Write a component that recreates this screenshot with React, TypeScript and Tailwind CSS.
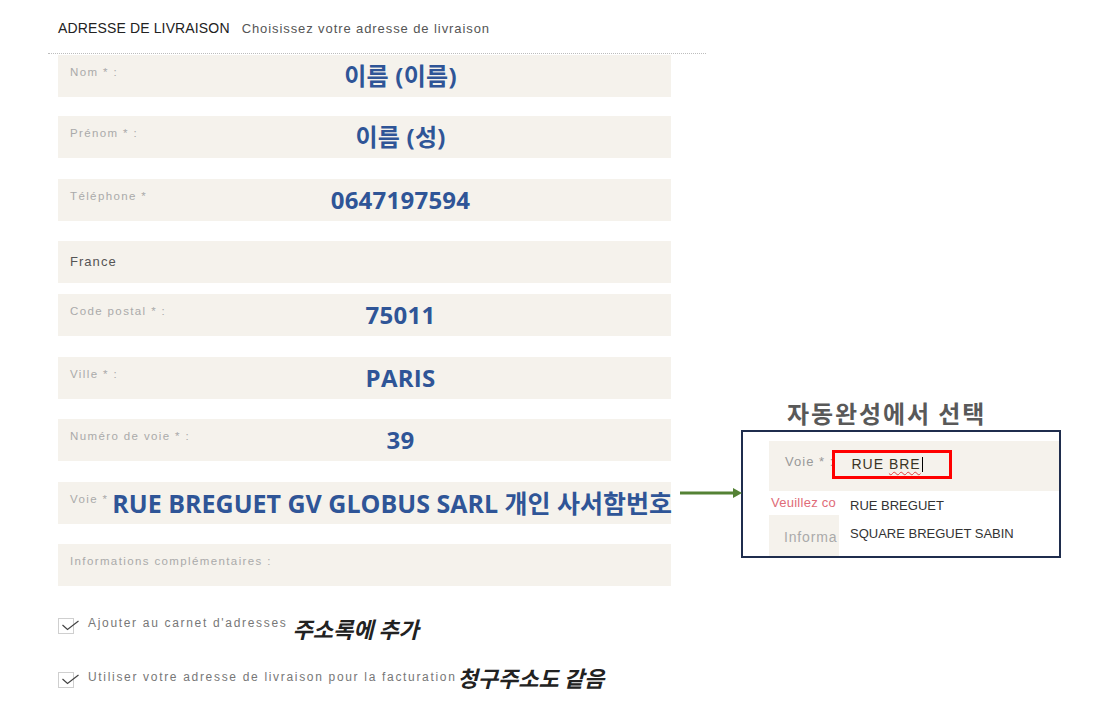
import React from "react";

interface Field {
  label: string;
  value?: string;
  gap: string;
}

const fields: Field[] = [
  { label: "Nom * :", value: "이름 (이름)", gap: "mt-0" },
  { label: "Prénom * :", value: "이름 (성)", gap: "mt-[19px]" },
  { label: "Téléphone *", value: "0647197594", gap: "mt-[21px]" },
];

const fields2: Field[] = [
  { label: "Code postal * :", value: "75011", gap: "mt-[11px]" },
  { label: "Ville * :", value: "PARIS", gap: "mt-[21px]" },
  { label: "Numéro de voie * :", value: "39", gap: "mt-[20px]" },
];

const FieldRow: React.FC<{ field: Field }> = ({ field }) => (
  <div className={"grid h-[42px] bg-[#f5f2ec] " + field.gap}>
    <span className="col-start-1 row-start-1 self-start whitespace-nowrap pl-[12px] pt-[11px] text-[11.5px] leading-[13px] tracking-[0.12em] text-[#aaa]">
      {field.label}
    </span>
    {field.value && (
      <span className="col-start-1 row-start-1 self-center justify-self-center pl-[72px] font-['Open_Sans','Noto_Sans_CJK_KR',sans-serif] text-[24px] font-bold leading-[30px] tracking-[0.01em] text-[#2f5597]">
        {field.value}
      </span>
    )}
  </div>
);

// small square with a tick drawn over it
const CheckBox = () => (
  <svg width="22" height="16" viewBox="0 0 22 16" className="shrink-0">
    <rect x="0.5" y="0.5" width="15" height="15" fill="white" stroke="#cfcfcf" />
    <path d="M4.5 7 L9.5 11.5 L20.5 3" fill="none" stroke="#444" strokeWidth="1.2" />
  </svg>
);

export default function App() {
  return (
    <div className="relative h-[707px] w-[1103px] overflow-hidden bg-white font-['Liberation_Sans',sans-serif]">
      <div className="flex">
        {/* form */}
        <div className="ml-[48px] w-[658px]">
          <div className="flex h-[53px] items-baseline pl-[10px] pt-[19px]">
            <span className="text-[14px] leading-[18px] tracking-[0.01em] text-[#222]">ADRESSE DE LIVRAISON</span>
            <span className="ml-[12px] text-[13px] leading-[18px] tracking-[0.07em] text-[#555]">
              Choisissez votre adresse de livraison
            </span>
          </div>
          <div className="border-t border-dotted border-[#bdbdbd]" />
          <div className="ml-[10px] mt-[1px] w-[613px]">
            {fields.map((f) => (
              <FieldRow key={f.label} field={f} />
            ))}
            <div className="mt-[20px] flex h-[42px] items-center bg-[#f5f2ec] pl-[12px] text-[13px] tracking-[0.08em] text-[#555]">
              France
            </div>
            {fields2.map((f) => (
              <FieldRow key={f.label} field={f} />
            ))}
            <div className="mt-[21px] flex h-[42px] items-center bg-[#f5f2ec] pl-[12px]">
              <span className="shrink-0 self-start whitespace-nowrap pt-[11px] text-[11.5px] leading-[13px] tracking-[0.12em] text-[#aaa]">
                Voie *
              </span>
              <span className="ml-[4px] whitespace-nowrap font-['Open_Sans','Noto_Sans_CJK_KR',sans-serif] text-[25px] font-bold leading-[30px] text-[#2f5597]">
                RUE BREGUET GV GLOBUS SARL 개인 사서함번호
              </span>
            </div>
            <FieldRow field={{ label: "Informations complémentaires :", gap: "mt-[20px]" }} />

            <div className="mt-[32px] flex items-start">
              <CheckBox />
              <span className="ml-[8px] whitespace-nowrap text-[12px] leading-[11px] tracking-[0.14em] text-[#777]">
                Ajouter au carnet d'adresses
              </span>
              <span className="ml-[5px] -mt-[3px] whitespace-nowrap font-['Noto_Sans_CJK_KR',sans-serif] text-[22px] font-bold italic leading-[26px] text-[#222]">
                주소록에 추가
              </span>
            </div>
            <div className="mt-[31px] flex items-start">
              <CheckBox />
              <span className="ml-[8px] whitespace-nowrap text-[12px] leading-[11px] tracking-[0.14em] text-[#777]">
                Utiliser votre adresse de livraison pour la facturation
              </span>
              <span className="ml-[1px] -mt-[8px] whitespace-nowrap font-['Noto_Sans_CJK_KR',sans-serif] text-[22px] font-bold italic leading-[26px] text-[#222]">
                청구주소도 같음
              </span>
            </div>
          </div>
        </div>

        {/* autocomplete inset */}
        <div className="ml-[35px] pt-[401px]">
          <div className="ml-[46px] whitespace-nowrap font-['Noto_Sans_CJK_KR',sans-serif] text-[24px] font-bold leading-[24px] tracking-[0.08em] text-[#595959]">
            자동완성에서 선택
          </div>
          <div className="relative mt-[5px] h-[128px] w-[320px] overflow-hidden border-2 border-[#1f2d4d] bg-white">
            <div className="ml-[26px] mt-[9px] flex h-[50px] items-center bg-[#f5f2ec] pl-[16px]">
              <span className="-mt-[8px] whitespace-nowrap text-[13px] tracking-[0.08em] text-[#999]">Voie * :</span>
              <div className="-ml-[3px] -mt-[3px] flex h-[29px] w-[120px] shrink-0 items-center border-[3px] border-[#ff0000] pl-[17px]">
                <span className="whitespace-nowrap text-[14px] tracking-[0.07em] text-[#3a3424]">
                  RUE <span className="underline decoration-[#e04040] decoration-wavy decoration-1 underline-offset-2">BRE</span>
                </span>
                <span className="ml-[1px] h-[15px] w-px bg-black" />
              </div>
            </div>
            <div className="ml-[28px] flex h-[24px] items-center whitespace-nowrap text-[13px] tracking-[0.02em] text-[#e06b78]">
              Veuillez co
            </div>
            <div className="ml-[26px] flex h-[45px] items-center bg-[#f5f2ec] pl-[15px]">
              <span className="whitespace-nowrap text-[14px] tracking-[0.06em] text-[#aaa]">Informa</span>
            </div>
            <div className="absolute bottom-0 left-[96px] right-0 top-[59px] bg-white pl-[11px] text-[13px] text-[#333]">
              <div className="pt-[6px] leading-[18px]">RUE BREGUET</div>
              <div className="mt-[10px] leading-[18px]">SQUARE BREGUET SABIN</div>
            </div>
          </div>
        </div>
      </div>

      {/* green arrow */}
      <svg className="absolute left-[678px] top-[487px]" width="66" height="12" viewBox="0 0 66 12">
        <line x1="2" y1="6" x2="56" y2="6" stroke="#548235" strokeWidth="3" />
        <polygon points="55,1 64,6 55,11" fill="#548235" />
      </svg>
    </div>
  );
}
